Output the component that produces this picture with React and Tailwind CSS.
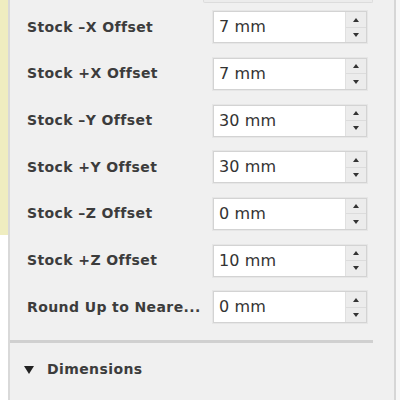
import React from "react";

const rows = [
  ["Stock \u2013X Offset", "7 mm"],
  ["Stock +X Offset", "7 mm"],
  ["Stock \u2013Y Offset", "30 mm"],
  ["Stock +Y Offset", "30 mm"],
  ["Stock \u2013Z Offset", "0 mm"],
  ["Stock +Z Offset", "10 mm"],
  ["Round Up to Neare...", "0 mm"],
];

function Spinner() {
  return (
    <div className="flex flex-col w-[21px] border-l border-[#e0e0e0] bg-[#ececec]">
      <div className="flex-1 flex items-center justify-center border-b border-[#dcdcdc]">
        <svg width="6" height="4" viewBox="0 0 6 4"><path d="M3 0L6 4H0Z" fill="#333" /></svg>
      </div>
      <div className="flex-1 flex items-center justify-center">
        <svg width="6" height="4" viewBox="0 0 6 4"><path d="M0 0H6L3 4Z" fill="#333" /></svg>
      </div>
    </div>
  );
}

export default function App() {
  return (
    <div
      className="flex w-[400px] h-[400px] bg-[#f7f7f7] overflow-hidden"
      style={{ fontFamily: '"DejaVu Sans", "Open Sans", sans-serif' }}
    >
      <div className="flex flex-col w-[8px]">
        <div className="h-[235px] bg-[#efedc0]" />
        <div className="flex-1 bg-white" />
      </div>
      <div className="w-[2px] bg-[#d9d9d9]" />
      <div className="flex flex-col w-[384px] bg-[#f0f0f0]">
        <div className="h-[3px] ml-[193px] w-[170px] border-x border-b border-[#dcdcdc] rounded-b-[2px] bg-[#ececec]" />
        <div className="flex flex-col mt-[1px]">
          {rows.map(([label, value], i) => (
            <div key={i} className="flex items-center h-[46.67px] pl-[17px]">
              <div className="w-[186px] text-[14px] font-bold text-[#3c3c3c] whitespace-nowrap tracking-[0.4px]">
                {label}
              </div>
              <div className="flex h-[32px] w-[154px] bg-white border border-[#d3d3d3] shadow-[0_0_0_1px_#e6e6e6]">
                <div className="flex-1 flex items-center pl-[5px] text-[16px] text-[#333] tracking-[0.1px]">
                  {value}
                </div>
                <Spinner />
              </div>
            </div>
          ))}
        </div>
        <div className="mt-[9px] h-[3px] w-[363px] bg-[#d0d0d0]" />
        <div className="flex items-center h-[54px] pl-[14px] gap-[13px]">
          <svg width="10" height="8" viewBox="0 0 10 8"><path d="M0 0H10L5 8Z" fill="#222" /></svg>
          <span className="text-[14px] font-bold text-[#3c3c3c] tracking-[0.4px]">Dimensions</span>
        </div>
      </div>
      <div className="w-[2px] bg-[#d6d6d6]" />
      <div className="flex-1 bg-[#f7f7f7]" />
    </div>
  );
}
